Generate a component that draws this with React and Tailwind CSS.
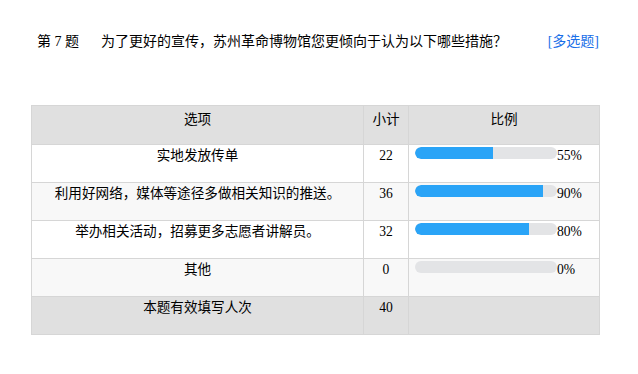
const rows = [
  { label: '实地发放传单', count: 22, pct: 55 },
  { label: '利用好网络，媒体等途径多做相关知识的推送。', count: 36, pct: 90 },
  { label: '举办相关活动，招募更多志愿者讲解员。', count: 32, pct: 80 },
  { label: '其他', count: 0, pct: 0 },
];

const font = { fontFamily: '"Liberation Serif", "Noto Sans CJK SC", serif' };

export default function App() {
  return (
    <div className="w-[638px] h-[374px] bg-white text-[13.6px] text-black" style={font}>
      <div className="flex items-center pt-[33px] pl-[37px] pr-[39px] leading-[18px] text-[14px]">
        <span className="w-[64px]">第 7 题</span>
        <span className="flex-1">为了更好的宣传，苏州革命博物馆您更倾向于认为以下哪些措施？</span>
        <span className="text-[#1a6fe8]">[多选题]</span>
      </div>

      <table className="ml-[31px] mt-[54px] w-[568px] border-collapse table-fixed">
        <colgroup>
          <col className="w-[332px]" />
          <col className="w-[45px]" />
          <col className="w-[191px]" />
        </colgroup>
        <thead>
          <tr className="bg-[#e0e0e0] h-[39px]">
            <th className="border border-[#d6d6d6] font-normal align-top pt-[5px] leading-[17px]">选项</th>
            <th className="border border-[#d6d6d6] font-normal align-top pt-[5px] leading-[17px]">小计</th>
            <th className="border border-[#d6d6d6] font-normal align-top pt-[5px] leading-[17px]">比例</th>
          </tr>
        </thead>
        <tbody>
          {rows.map((r, i) => (
            <tr key={r.label} className={`h-[38px] ${i % 2 === 1 ? 'bg-[#f8f8f8]' : 'bg-white'}`}>
              <td className="border border-[#d6d6d6] align-top text-center pt-[2px] leading-[17px]">{r.label}</td>
              <td className="border border-[#d6d6d6] align-top text-center pt-[2px] leading-[17px]">{r.count}</td>
              <td className="border border-[#d6d6d6] align-top pt-[1px] pl-[6px] leading-[17px]">
                <div className="flex items-start">
                  <div className="mt-[1px] w-[142px] h-[12px] rounded-full bg-[#e3e4e6] overflow-hidden">
                    <div className="h-full bg-[#2aa4f7] rounded-l-full" style={{ width: `${r.pct}%` }} />
                  </div>
                  <span className="pt-[1px]">{r.pct}%</span>
                </div>
              </td>
            </tr>
          ))}
          <tr className="h-[38px] bg-[#e0e0e0]">
            <td className="border border-[#d6d6d6] align-top text-center pt-[2px] leading-[17px]">本题有效填写人次</td>
            <td className="border border-[#d6d6d6] align-top text-center pt-[2px] leading-[17px]">40</td>
            <td className="border border-[#d6d6d6]"></td>
          </tr>
        </tbody>
      </table>
    </div>
  );
}
